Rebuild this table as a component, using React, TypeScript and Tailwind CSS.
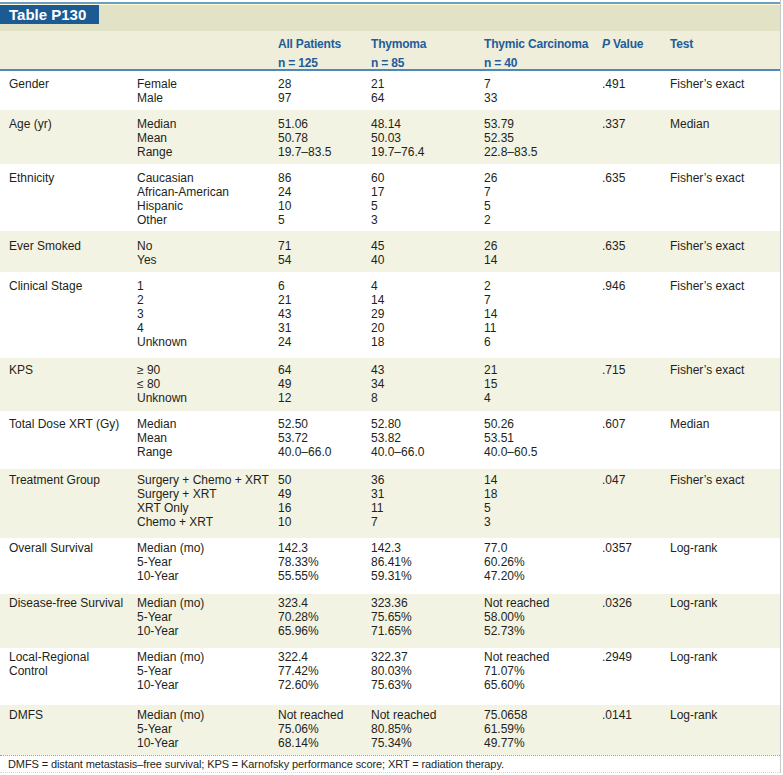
const rows = [
  {
    label: ["Gender"],
    sub: ["Female", "Male"],
    all: ["28", "97"],
    thy: ["21", "64"],
    car: ["7", "33"],
    p: ".491",
    test: "Fisher’s exact",
    h: "h-[39px] pt-[6px]",
  },
  {
    label: ["Age (yr)"],
    sub: ["Median", "Mean", "Range"],
    all: ["51.06", "50.78", "19.7–83.5"],
    thy: ["48.14", "50.03", "19.7–76.4"],
    car: ["53.79", "52.35", "22.8–83.5"],
    p: ".337",
    test: "Median",
    h: "h-[54px] pt-[7px]",
  },
  {
    label: ["Ethnicity"],
    sub: ["Caucasian", "African-American", "Hispanic", "Other"],
    all: ["86", "24", "10", "5"],
    thy: ["60", "17", "5", "3"],
    car: ["26", "7", "5", "2"],
    p: ".635",
    test: "Fisher’s exact",
    h: "h-[67px] pt-[7px]",
  },
  {
    label: ["Ever Smoked"],
    sub: ["No", "Yes"],
    all: ["71", "54"],
    thy: ["45", "40"],
    car: ["26", "14"],
    p: ".635",
    test: "Fisher’s exact",
    h: "h-[41px] pt-[8px]",
  },
  {
    label: ["Clinical Stage"],
    sub: ["1", "2", "3", "4", "Unknown"],
    all: ["6", "21", "43", "31", "24"],
    thy: ["4", "14", "29", "20", "18"],
    car: ["2", "7", "14", "11", "6"],
    p: ".946",
    test: "Fisher’s exact",
    h: "h-[86px] pt-[7px]",
  },
  {
    label: ["KPS"],
    sub: ["≥ 90", "≤ 80", "Unknown"],
    all: ["64", "49", "12"],
    thy: ["43", "34", "8"],
    car: ["21", "15", "4"],
    p: ".715",
    test: "Fisher’s exact",
    h: "h-[53px] pt-[5px]",
  },
  {
    label: ["Total Dose XRT (Gy)"],
    sub: ["Median", "Mean", "Range"],
    all: ["52.50", "53.72", "40.0–66.0"],
    thy: ["52.80", "53.82", "40.0–66.0"],
    car: ["50.26", "53.51", "40.0–60.5"],
    p: ".607",
    test: "Median",
    h: "h-[58px] pt-[6px]",
  },
  {
    label: ["Treatment Group"],
    sub: ["Surgery + Chemo + XRT", "Surgery + XRT", "XRT Only", "Chemo + XRT"],
    all: ["50", "49", "16", "10"],
    thy: ["36", "31", "11", "7"],
    car: ["14", "18", "5", "3"],
    p: ".047",
    test: "Fisher’s exact",
    h: "h-[69px] pt-[4px]",
  },
  {
    label: ["Overall Survival"],
    sub: ["Median (mo)", "5-Year", "10-Year"],
    all: ["142.3", "78.33%", "55.55%"],
    thy: ["142.3", "86.41%", "59.31%"],
    car: ["77.0", "60.26%", "47.20%"],
    p: ".0357",
    test: "Log-rank",
    h: "h-[56px] pt-[3px]",
  },
  {
    label: ["Disease-free Survival"],
    sub: ["Median (mo)", "5-Year", "10-Year"],
    all: ["323.4", "70.28%", "65.96%"],
    thy: ["323.36", "75.65%", "71.65%"],
    car: ["Not reached", "58.00%", "52.73%"],
    p: ".0326",
    test: "Log-rank",
    h: "h-[54px] pt-[2px]",
  },
  {
    label: ["Local-Regional", "Control"],
    sub: ["Median (mo)", "5-Year", "10-Year"],
    all: ["322.4", "77.42%", "72.60%"],
    thy: ["322.37", "80.03%", "75.63%"],
    car: ["Not reached", "71.07%", "65.60%"],
    p: ".2949",
    test: "Log-rank",
    h: "h-[57px] pt-[2px]",
  },
  {
    label: ["DMFS"],
    sub: ["Median (mo)", "5-Year", "10-Year"],
    all: ["Not reached", "75.06%", "68.14%"],
    thy: ["Not reached", "80.85%", "75.34%"],
    car: ["75.0658", "61.59%", "49.77%"],
    p: ".0141",
    test: "Log-rank",
    h: "h-[50px] pt-[3px]",
  },
]

const cols = "grid grid-cols-[128px_141px_93px_113px_118px_68px_1fr] pl-[9px]"

function Lines({ items }: { items: string[] }) {
  return (
    <div>
      {items.map((t, i) => (
        <div key={i} className="leading-[14px] whitespace-nowrap">
          {t}
        </div>
      ))}
    </div>
  )
}

export default function App() {
  return (
    <div className="w-[783px] h-[775px] bg-white font-['Liberation_Sans',Arial,sans-serif] text-[12px] text-[#231f20]">
      <div className="w-[781px] pt-[2px] border-r border-[#c9c9c9]">
        {/* Title band */}
        <div className="border-t-2 border-[#6d9dc6]">
          <div className="h-[27px] bg-[#e2e3c6] border-t border-[#fbfbd6]">
            <div className="w-[99px] h-[19px] bg-[#1c5a93] text-white font-bold text-[15px] leading-[19px] pl-[9px]">
              Table P130
            </div>
          </div>
        </div>

        {/* Column headers */}
        <div className={`${cols} h-[40px] pt-[4px] bg-[#eeeedb] border-b-2 border-[#4f88bb] text-[#1f5c9a] font-bold leading-[19px] tracking-[-0.2px]`}>
          <div />
          <div />
          <div>
            <div>All Patients</div>
            <div>n = 125</div>
          </div>
          <div>
            <div>Thymoma</div>
            <div>n = 85</div>
          </div>
          <div>
            <div className="whitespace-nowrap">Thymic Carcinoma</div>
            <div>n = 40</div>
          </div>
          <div>
            <span className="italic">P</span> Value
          </div>
          <div>Test</div>
        </div>

        {/* Body rows */}
        {rows.map((r, i) => (
          <div
            key={i}
            className={`${cols} ${r.h} ${i % 2 === 1 ? "bg-[#f3f3e4]" : "bg-white"}`}
          >
            <Lines items={r.label} />
            <Lines items={r.sub} />
            <Lines items={r.all} />
            <Lines items={r.thy} />
            <Lines items={r.car} />
            <Lines items={[r.p]} />
            <Lines items={[r.test]} />
          </div>
        ))}

        {/* Footnote */}
        <div className="h-[18px] border-t border-dotted border-[#7fa6c8] border-b border-b-[#d6d6d6] border-b-solid pl-[8px] text-[11px] leading-[16px] tracking-[-0.1px]">
          DMFS = distant metastasis–free survival; KPS = Karnofsky performance score; XRT = radiation therapy.
        </div>
      </div>
    </div>
  )
}
